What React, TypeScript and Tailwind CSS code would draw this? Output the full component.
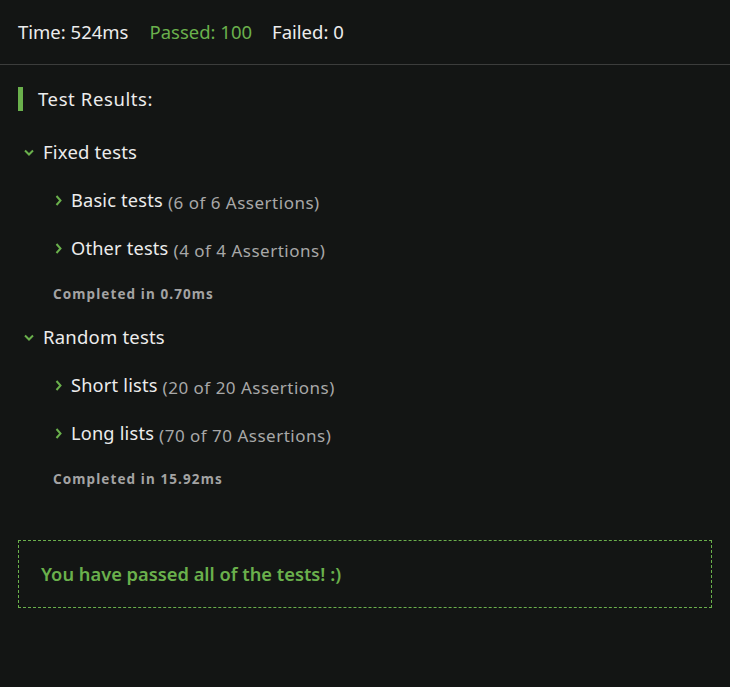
import React from 'react';

type Item = { name: string; count: string };
type Group = { title: string; items: Item[]; time: string };

const groups: Group[] = [
  {
    title: 'Fixed tests',
    items: [
      { name: 'Basic tests', count: '(6 of 6 Assertions)' },
      { name: 'Other tests', count: '(4 of 4 Assertions)' },
    ],
    time: 'Completed in 0.70ms',
  },
  {
    title: 'Random tests',
    items: [
      { name: 'Short lists', count: '(20 of 20 Assertions)' },
      { name: 'Long lists', count: '(70 of 70 Assertions)' },
    ],
    time: 'Completed in 15.92ms',
  },
];

function ChevronDown() {
  return (
    <svg width="10" height="7" viewBox="0 0 10 7" className="shrink-0">
      <path d="M1 1.5 L5 5.5 L9 1.5" fill="none" stroke="#6ab04c" strokeWidth="2" />
    </svg>
  );
}

function ChevronRight() {
  return (
    <svg width="7" height="11" viewBox="0 0 7 11" className="shrink-0">
      <path d="M1.5 1 L5.5 5.5 L1.5 10" fill="none" stroke="#6ab04c" strokeWidth="2" />
    </svg>
  );
}

export default function App() {
  return (
    <div
      className="w-[730px] h-[687px] bg-[#131514] text-[#ececec] overflow-hidden"
      style={{ fontFamily: '"Noto Sans", "Open Sans", sans-serif' }}
    >
      <div className="h-[65px] flex items-center gap-[22px] px-[18px] text-[18.5px] border-b border-[#3c3d3c]">
        <span>Time: 524ms</span>
        <span className="text-[#6ab04c] -ml-[1px]">Passed: 100</span>
        <span className="-ml-[2px]">Failed: 0</span>
      </div>

      <div className="px-[18px]">
        <div className="mt-[22px] h-[24px] flex items-center gap-[15px]">
          <div className="w-[5px] h-[24px] bg-[#6ab04c]" />
          <span className="text-[18.5px] tracking-[0.6px]">Test Results:</span>
        </div>

        {groups.map((g, gi) => (
          <div key={g.title} className={gi === 0 ? 'mt-[26px]' : 'mt-[18px]'}>
            <div className="flex items-center gap-[9px] pl-[6px] h-[30px]">
              <ChevronDown />
              <span className="text-[18.5px] tracking-[0.2px]">{g.title}</span>
            </div>
            <div className="pl-[37px]">
              {g.items.map((it, i) => (
                <div
                  key={it.name}
                  className={`flex items-center h-[30px] ${i === 0 ? 'mt-[19px]' : 'mt-[18px]'}`}
                >
                  <span className="mr-[9px] -mt-[2px] flex">
                    <ChevronRight />
                  </span>
                  <div className="flex items-baseline">
                    <span className="text-[18.2px] tracking-[0.2px]">{it.name}</span>
                    <span className="ml-[5px] text-[17px] tracking-[0.5px] text-[#a8a8a8] relative top-[2px]">
                      {it.count}
                    </span>
                  </div>
                </div>
              ))}
              <div className="mt-[20px] h-[20px] flex items-center -ml-[2px] text-[13.5px] font-bold text-[#a3a3a3] tracking-[1.1px]">
                {g.time}
              </div>
            </div>
          </div>
        ))}

        <div className="mt-[51px] h-[68px] border border-dashed border-[#6ab04c] flex items-center px-[22px]">
          <span className="text-[18.3px] font-semibold text-[#6ab04c]">You have passed all of the tests! :)</span>
        </div>
      </div>
    </div>
  );
}
